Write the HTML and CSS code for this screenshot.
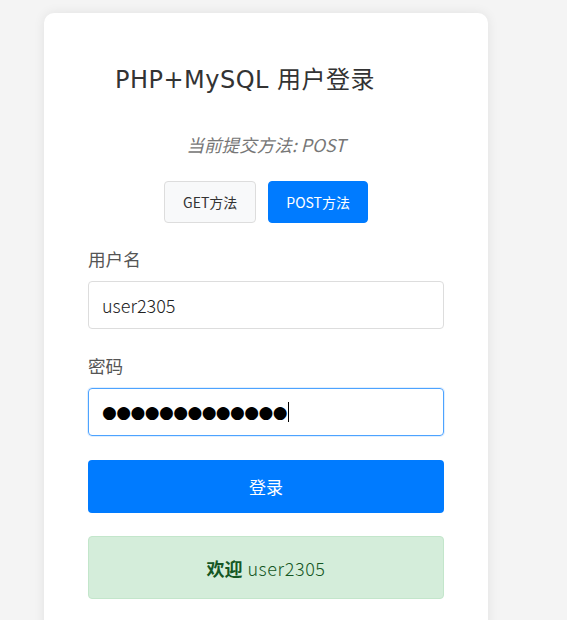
FILE: index.html
```html
<!DOCTYPE html>
<html lang="zh">
<head>
<meta charset="utf-8">
<title>PHP+MySQL 用户登录</title>
<link rel="stylesheet" href="styles.css">
</head>
<body>
<div class="card">
  <h1 class="title">PHP+MySQL 用户登录</h1>
  <p class="method">当前提交方法: POST</p>
  <div class="switch">
    <button class="btn btn-light" type="button">GET方法</button>
    <button class="btn btn-primary" type="button">POST方法</button>
  </div>
  <form class="form">
    <div class="field">
      <label class="label">用户名</label>
      <div class="input">user2305</div>
    </div>
    <div class="field">
      <label class="label">密码</label>
      <div class="input input-focus"><span class="dots">●●●●●●●●●●●●●</span><span class="caret"></span></div>
    </div>
    <button class="submit" type="button">登录</button>
  </form>
  <div class="alert"><strong>欢迎</strong> <span class="alert-name">user2305</span></div>
</div>
</body>
</html>
```
FILE: styles.css
```css
html, body {
  margin: 0;
  padding: 0;
  background: #f4f4f4;
  font-family: "Noto Sans CJK SC", "Noto Sans", sans-serif;
  color: #333;
}
.card {
  box-sizing: border-box;
  width: 444px;
  margin: 13px 0 0 44px;
  padding: 44px 44px 40px;
  background: #fff;
  border-radius: 10px;
  box-shadow: 0 0 12px rgba(0,0,0,0.08);
  min-height: 640px;
}
.title {
  margin: 0;
  padding-right: 42px;
  text-align: center;
  font-family: "DejaVu Sans", "Noto Sans CJK SC", sans-serif;
  font-weight: normal;
  font-size: 24px;
  letter-spacing: 0.5px;
  line-height: 46px;
  color: #333;
}
.method {
  margin: 29px 0 0;
  text-align: center;
  font-style: italic;
  color: #777;
  font-size: 17.6px;
  line-height: 26px;
}
.switch {
  display: flex;
  justify-content: center;
  gap: 12px;
  margin-top: 23px;
}
.btn {
  height: 42px;
  padding: 0 17px;
  font-family: inherit;
  font-size: 14px;
  border-radius: 4px;
  cursor: pointer;
}
.btn-light {
  padding: 0 18px;
  background: #f8f9fa;
  border: 1px solid #ddd;
  color: #333;
}
.btn-primary {
  background: #007bff;
  border: 1px solid #007bff;
  color: #fff;
}
.form {
  margin-top: 23px;
}
.field {
  margin-bottom: 24px;
}
.label {
  display: block;
  color: #555;
  font-size: 17.6px;
  line-height: 26px;
  margin-bottom: 9px;
}
.input {
  box-sizing: border-box;
  height: 48px;
  display: flex;
  align-items: center;
  padding: 0 13px;
  border: 1px solid #ddd;
  border-radius: 4px;
  font-size: 18px;
  font-weight: 300;
  color: #222;
}
.input-focus {
  border-color: #4da3ff;
  box-shadow: 0 0 0 1px rgba(0,123,255,0.12);
}
.dots {
  font-family: "DejaVu Sans", sans-serif;
  font-weight: normal;
  font-size: 17px;
  letter-spacing: -0.6px;
  color: #000;
}
.caret {
  display: inline-block;
  width: 1px;
  height: 20px;
  background: #000;
  margin-left: 1px;
}
.submit {
  display: block;
  width: 100%;
  height: 53px;
  border: none;
  border-radius: 4px;
  background: #007bff;
  color: #fff;
  font-family: inherit;
  font-size: 17px;
  cursor: pointer;
}
.alert {
  margin-top: 23px;
  height: 63px;
  box-sizing: border-box;
  display: flex;
  align-items: center;
  justify-content: center;
  gap: 5px;
  background: #d4edda;
  border: 1px solid #c3e6cb;
  border-radius: 4px;
  color: #155724;
  font-size: 18px;
}
.alert strong {
  font-weight: bold;
}
.alert-name {
  font-weight: 300;
  letter-spacing: 0.6px;
}
```
